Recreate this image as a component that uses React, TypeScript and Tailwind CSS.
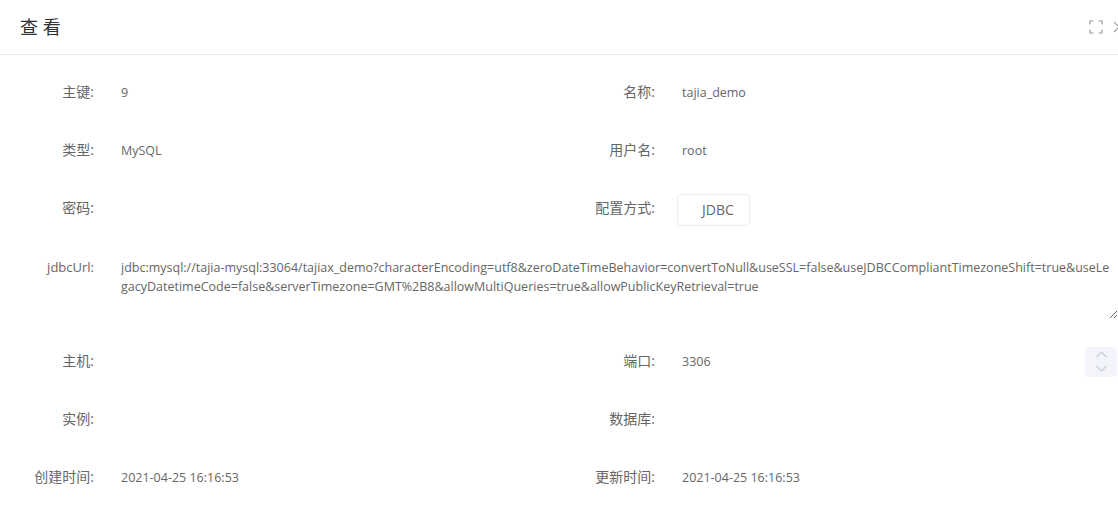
import { ChevronDown, ChevronUp } from 'lucide-react';

const jdbcUrl =
    'jdbc:mysql://tajia-mysql:33064/tajiax_demo?characterEncoding=utf8&zeroDateTimeBehavior=convertToNull&useSSL=false&useJDBCCompliantTimezoneShift=true&useLegacyDatetimeCode=false&serverTimezone=GMT%2B8&allowMultiQueries=true&allowPublicKeyRetrieval=true';

function Field({ label, value, children }: { label: string; value?: string; children?: React.ReactNode }) {
    return (
        <div className="flex h-[58px] items-center">
            <div className="w-[94px] shrink-0 pb-[2px] text-right text-sm text-[#666]">{label}:</div>
            <div className="ml-[27px] min-w-0 flex-1 text-[12.5px] text-[#666]">{value ?? children}</div>
        </div>
    );
}

export default function App() {
    return (
        <div className="h-[506px] w-[1118px] overflow-hidden bg-white font-['Open_Sans','Noto_Sans_CJK_SC',sans-serif]">
            <header className="flex h-[55px] items-center justify-between border-b border-[#e8e8e8] pl-5">
                <h1 className="text-lg text-[#303133]">查 看</h1>
                <div className="flex items-center gap-[11px]">
                    <svg width="14" height="14" viewBox="0 0 14 14" fill="none" stroke="#999" strokeWidth="1.2">
                        <path d="M1 4.5V1h3.5M9.5 1H13v3.5M13 9.5V13H9.5M4.5 13H1V9.5" />
                    </svg>
                    <svg width="5" height="12" viewBox="0 0 5 12" fill="none" stroke="#999" strokeWidth="1.1" className="mr-[-1px]">
                        <path d="M0 1l5 5M0 11l5-5" />
                    </svg>
                </div>
            </header>

            <main className="pt-[9px]">
                <div className="grid grid-cols-[561px_557px]">
                    <Field label="主键" value="9" />
                    <Field label="名称" value="tajia_demo" />
                    <Field label="类型" value="MySQL" />
                    <Field label="用户名" value="root" />
                    <Field label="密码" />
                    <Field label="配置方式">
                        <div className="ml-[-5px] mt-[2px] flex h-8 w-[73px] items-center rounded border border-[#ebedf3] pl-6 text-sm">JDBC</div>
                    </Field>
                </div>

                <div className="flex h-[95px] items-start pt-[20px]">
                    <div className="w-[94px] shrink-0 text-right text-[13px] leading-[19px] text-[#666]">jdbcUrl:</div>
                    <textarea
                        readOnly
                        value={jdbcUrl}
                        className="ml-[27px] h-[61px] w-[997px] resize-y overflow-hidden break-all bg-transparent pr-[4px] text-[12.5px] leading-[19px] text-[#666] outline-none"
                    />
                </div>

                <div className="grid grid-cols-[561px_557px]">
                    <Field label="主机" />
                    <Field label="端口">
                        <div className="flex items-center justify-between">
                            <span>3306</span>
                            <div className="mb-[1px] mr-[1px] flex h-[30px] w-8 flex-col items-center justify-center gap-px rounded bg-[#f4f5fb] text-[#c8ccd4]">
                                <svg width="11" height="7" viewBox="0 0 11 7" fill="none" stroke="currentColor" strokeWidth="1.2">
                                    <path d="M.5 6l5-5 5 5" />
                                </svg>
                                <svg width="11" height="7" viewBox="0 0 11 7" fill="none" stroke="currentColor" strokeWidth="1.2" className="mt-[6px]">
                                    <path d="M.5 1l5 5 5-5" />
                                </svg>
                            </div>
                        </div>
                    </Field>
                    <Field label="实例" />
                    <Field label="数据库" />
                    <Field label="创建时间" value="2021-04-25 16:16:53" />
                    <Field label="更新时间" value="2021-04-25 16:16:53" />
                </div>
            </main>
        </div>
    );
}
